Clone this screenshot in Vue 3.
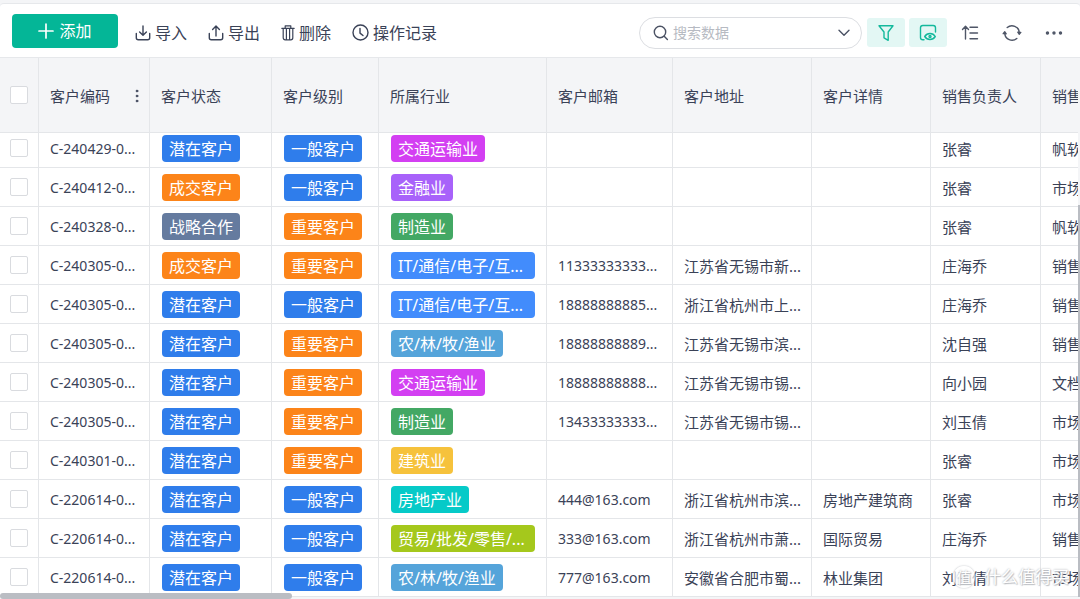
<script setup>
import { ref } from 'vue'

const keyword = ref('')

const columns = [
  { key: 'code', label: '客户编码' },
  { key: 'status', label: '客户状态' },
  { key: 'level', label: '客户级别' },
  { key: 'industry', label: '所属行业' },
  { key: 'mail', label: '客户邮箱' },
  { key: 'address', label: '客户地址' },
  { key: 'detail', label: '客户详情' },
  { key: 'owner', label: '销售负责人' },
  { key: 'dept', label: '销售' },
]

const tagColors = {
  潜在客户: 'blue',
  成交客户: 'orange',
  战略合作: 'slate',
  一般客户: 'blue',
  重要客户: 'orange',
  交通运输业: 'magenta',
  金融业: 'purple',
  制造业: 'green',
  'IT/通信/电子/互...': 'azure',
  '农/林/牧/渔业': 'sky',
  建筑业: 'yellow',
  房地产业: 'cyan',
  '贸易/批发/零售/...': 'lime',
}

const tagKeys = ['status', 'level', 'industry']
const isTag = (key) => tagKeys.includes(key)
const isLatin = (key) => key === 'code' || key === 'mail'

const rows = [
  ['C-240429-0...', '潜在客户', '一般客户', '交通运输业', '', '', '', '张睿', '帆软'],
  ['C-240412-0...', '成交客户', '一般客户', '金融业', '', '', '', '张睿', '市场'],
  ['C-240328-0...', '战略合作', '重要客户', '制造业', '', '', '', '张睿', '帆软'],
  ['C-240305-0...', '成交客户', '重要客户', 'IT/通信/电子/互...', '11333333333...', '江苏省无锡市新...', '', '庄海乔', '销售'],
  ['C-240305-0...', '潜在客户', '一般客户', 'IT/通信/电子/互...', '18888888885...', '浙江省杭州市上...', '', '庄海乔', '销售'],
  ['C-240305-0...', '潜在客户', '重要客户', '农/林/牧/渔业', '18888888889...', '江苏省无锡市滨...', '', '沈自强', '销售'],
  ['C-240305-0...', '潜在客户', '重要客户', '交通运输业', '18888888888...', '江苏省无锡市锡...', '', '向小园', '文档'],
  ['C-240305-0...', '潜在客户', '重要客户', '制造业', '13433333333...', '江苏省无锡市锡...', '', '刘玉倩', '市场'],
  ['C-240301-0...', '潜在客户', '重要客户', '建筑业', '', '', '', '张睿', '市场'],
  ['C-220614-0...', '潜在客户', '一般客户', '房地产业', '444@163.com', '浙江省杭州市滨...', '房地产建筑商', '张睿', '市场'],
  ['C-220614-0...', '潜在客户', '一般客户', '贸易/批发/零售/...', '333@163.com', '浙江省杭州市萧...', '国际贸易', '庄海乔', '销售'],
  ['C-220614-0...', '潜在客户', '一般客户', '农/林/牧/渔业', '777@163.com', '安徽省合肥市蜀...', '林业集团', '刘玉倩', '市场'],
]
</script>

<template>
  <main class="page">
    <div class="toolbar">
      <button class="add" type="button">
        <svg width="16" height="16" viewBox="0 0 16 16"><path d="M8 1v14M1 8h14" stroke-width="1.7" /></svg>
        添加
      </button>
      <button class="action" type="button">
        <svg width="16" height="18" viewBox="0 0 16 18"><path d="M1.3 9.5v4.3a2 2 0 0 0 2 2h9.4a2 2 0 0 0 2-2V9.5M8 2v9M4.6 8 8 11.3 11.4 8" /></svg>
        导入
      </button>
      <button class="action" type="button">
        <svg width="16" height="18" viewBox="0 0 16 18"><path d="M1.3 9.5v4.3a2 2 0 0 0 2 2h9.4a2 2 0 0 0 2-2V9.5M8 12V2.3M4.6 5.5 8 2.1l3.4 3.4" /></svg>
        导出
      </button>
      <button class="action" type="button">
        <svg width="14" height="18" viewBox="0 0 14 18"><path d="M.8 4.3h12.4M4.2 4V1.8h5.6V4M2.2 4.5v9.3a2 2 0 0 0 2 2h5.6a2 2 0 0 0 2-2V4.5M5.4 4.5v11M8.6 4.5v11" stroke-width="1.2" /></svg>
        删除
      </button>
      <button class="action" type="button">
        <svg width="17" height="18" viewBox="0 0 17 18"><circle cx="8.5" cy="8.5" r="7.5" /><path d="M8 4.5v4.6l3 2.4" /></svg>
        操作记录
      </button>

      <div class="search">
        <svg width="16" height="16" viewBox="0 0 16 16"><circle cx="7" cy="7" r="5.7" /><path d="m11.2 11.2 3.2 3.2" /></svg>
        <input v-model="keyword" type="text" placeholder="搜索数据" aria-label="搜索数据" />
        <button type="button" aria-label="展开搜索选项">
          <svg width="12" height="8" viewBox="0 0 12 8"><path d="m1 1.3 5 5 5-5" /></svg>
        </button>
      </div>

      <div class="tools">
        <button class="tool on" type="button" aria-label="筛选">
          <svg width="18" height="18" viewBox="0 0 18 18"><path d="M2 1.8h14L11.2 8v8.300L7 13.800V8z" /></svg>
        </button>
        <button class="tool on" type="button" aria-label="显示字段">
          <svg width="18" height="18" viewBox="0 0 18 18">
            <path d="M5 15.8H3.8a2.3 2.3 0 0 1-2.3-2.3V3.8a2.3 2.3 0 0 1 2.3-2.3h10.4a2.3 2.3 0 0 1 2.3 2.3V8M5.7 12.5c1.3-2 3.1-3 5.3-3s4.1 1 5.3 3c-1.3 2-3.1 3-5.3 3s-4-1-5.3-3z" />
            <circle cx="11" cy="12.5" r="1" />
          </svg>
        </button>
        <button class="tool" type="button" aria-label="行高">
          <svg width="18" height="18" viewBox="0 0 18 18"><path d="M4.5 15V3M1.500 5.500l3-3.200 3 3.200M9 3.300h7.500M9 9h7.500M9 14.700h7.500" /></svg>
        </button>
        <button class="tool" type="button" aria-label="刷新">
          <svg width="20" height="18" viewBox="0 0 20 18">
            <path d="M5.200 3.600a7.200 7.200 0 0 1 12 5M14.800 14.400a7.200 7.200 0 0 1-12-5" />
            <path class="solid" d="m15.800 8.200 3 .2-1.600 1.800zM4.200 9.800l-3-.2 1.600-1.800z" />
          </svg>
        </button>
        <button class="tool" type="button" aria-label="更多">
          <svg width="18" height="6" viewBox="0 0 18 6"><circle class="solid" cx="2.5" cy="3" r="1" /><circle class="solid" cx="9" cy="3" r="1" /><circle class="solid" cx="15.5" cy="3" r="1" /></svg>
        </button>
      </div>
    </div>

    <div class="grid">
      <table>
        <colgroup>
          <col class="w-check" />
          <col v-for="c in columns" :key="c.key" :class="'w-' + c.key" />
        </colgroup>
        <thead>
          <tr>
            <th class="check"><input type="checkbox" aria-label="全选" /></th>
            <th v-for="c in columns" :key="c.key" scope="col">
              <div class="head">
                {{ c.label }}
                <button v-if="c.key === 'code'" type="button" aria-label="列菜单">
                  <svg width="4" height="14" viewBox="0 0 4 14"><circle cx="2" cy="2" r="1" /><circle cx="2" cy="7" r="1" /><circle cx="2" cy="12" r="1" /></svg>
                </button>
              </div>
            </th>
          </tr>
        </thead>
        <tbody>
          <tr v-for="(row, i) in rows" :key="i">
            <td class="check"><input type="checkbox" :aria-label="'选择第' + (i + 1) + '行'" /></td>
            <td v-for="(c, j) in columns" :key="c.key" :class="{ tagged: isTag(c.key), latin: isLatin(c.key) }">
              <span v-if="isTag(c.key)" class="tag" :class="[tagColors[row[j]], { full: row[j].endsWith('...') }]">{{ row[j] }}</span>
              <template v-else>{{ row[j] }}</template>
            </td>
          </tr>
        </tbody>
      </table>
    </div>

    <div class="bar-x"></div>
    <div class="bar-y"></div>
    <div class="mark"><span class="seal">值</span>什么值得买</div>
  </main>
</template>

<style>
body {
  background: #f4f5f7;
}
</style>

<style scoped>
.page {
  position: relative;
  height: 100vh;
  padding-top: 3px;
  box-sizing: border-box;
  overflow: hidden;
  background: #f4f5f7;
  color: #3a4257;
  font: 15px/20px "Noto Sans", "Noto Sans CJK SC", sans-serif;
}
button,
input {
  font: inherit;
  color: inherit;
}
button {
  display: flex;
  align-items: center;
  justify-content: center;
  padding: 0;
  border: 0;
  background: none;
  cursor: pointer;
}
svg {
  flex: none;
  fill: none;
  stroke: currentColor;
  stroke-width: 1.4;
  stroke-linecap: round;
  stroke-linejoin: round;
}
.solid {
  fill: currentColor;
}

.toolbar {
  display: flex;
  align-items: center;
  height: 55px;
  padding: 4px 7px 0 12px;
  box-sizing: border-box;
  border-top: 1px solid #e6e8eb;
  border-bottom: 1px solid #e6e8eb;
  border-radius: 4px 4px 0 0;
  background: #fff;
  font-size: 16px;
}
.add {
  gap: 5px;
  width: 106px;
  height: 34px;
  margin: 0 17px 4px 0;
  border-radius: 4px;
  background: #04b697;
  color: #fff;
}
.action {
  gap: 4px;
  margin-right: 21px;
  color: #3a4257;
}
.search {
  display: flex;
  align-items: center;
  gap: 4px;
  width: 223px;
  height: 32px;
  margin-left: auto;
  padding: 0 11px 0 13px;
  box-sizing: border-box;
  border: 1px solid #dcdee2;
  border-radius: 16px;
  color: #4a5163;
}
.search input {
  flex: 1;
  min-width: 0;
  padding: 0;
  border: 0;
  outline: 0;
  background: none;
  font-size: 14px;
}
.search input::placeholder {
  color: #b6bac2;
}
.tools {
  display: flex;
  gap: 4px;
  margin-left: 5px;
}
.tool {
  width: 38px;
  height: 29px;
  border-radius: 3px;
  color: #4f5667;
}
.tool.on {
  background: #e3f7f4;
  color: #14b99c;
}

.grid {
  margin-right: 2px;
  overflow: hidden;
}
table {
  width: 100%;
  table-layout: fixed;
  border-collapse: separate;
  border-spacing: 0;
  background: #fff;
}
.w-check { width: 39px; }
.w-code { width: 111px; }
.w-status { width: 122px; }
.w-level { width: 107px; }
.w-industry { width: 168px; }
.w-mail { width: 126px; }
.w-address { width: 139px; }
.w-detail { width: 119px; }
.w-owner { width: 110px; }
th,
td {
  height: 39px;
  padding: 1px 0 0 11px;
  box-sizing: border-box;
  border-right: 1px solid #e4e6e9;
  border-bottom: 1px solid #e4e6e9;
  font-weight: 400;
  text-align: left;
  vertical-align: middle;
  white-space: nowrap;
  overflow: hidden;
}
th {
  height: 75px;
  padding-top: 2px;
  background: #f4f5f7;
}
th:last-child,
td:last-child {
  border-right: 0;
}
td.latin {
  font-size: 14px;
}
th.check,
td.check {
  padding: 0 0 0 10px;
}
.check input {
  display: block;
  width: 18px;
  height: 18px;
  margin: 0;
  appearance: none;
  border: 1px solid #d9dbdf;
  border-radius: 2px;
  background: #fff;
}
.head {
  display: flex;
  align-items: center;
  justify-content: space-between;
  padding-right: 10px;
}
.head svg {
  fill: currentColor;
  stroke-width: 0.6;
}
td.tagged {
  padding: 1px 11px 0 12px;
}
tbody tr:first-child td {
  height: 35px;
  padding-bottom: 4px;
}
.tag {
  display: block;
  width: fit-content;
  padding: 1px 7px 0;
  box-sizing: border-box;
  border-radius: 4px;
  color: #fff;
  font-size: 16px;
  line-height: 26px;
}
.tag.full {
  width: 100%;
}
.blue { background: #2f7deb; }
.orange { background: #fc8419; }
.slate { background: #657b9f; }
.magenta { background: #d33ff2; }
.purple { background: #a862fa; }
.green { background: #43a864; }
.azure { background: #428cfc; }
.sky { background: #55a4da; }
.yellow { background: #f6c23c; }
.cyan { background: #06cac8; }
.lime { background: #a5c81c; }

.bar-x,
.bar-y {
  position: absolute;
  background: #babdc3;
}
.bar-x {
  left: 0;
  bottom: 0;
  width: 27%;
  height: 6px;
  border-radius: 3px;
}
.bar-y {
  right: 0;
  bottom: 2px;
  width: 2px;
  height: 392px;
}
.mark {
  position: absolute;
  right: 11px;
  bottom: 11px;
  display: flex;
  align-items: center;
  gap: 9px;
  color: #fff;
  font-size: 17px;
  line-height: 22px;
  text-shadow: 0 0 2px #a4a7ad, 1px 1px 1px #c4c6cb;
}
.seal {
  width: 22px;
  border-radius: 50%;
  background: rgba(255, 255, 255, 0.7);
  box-shadow: 0 0 2px #b4b7bd;
  font-size: 15px;
  text-align: center;
}
</style>
